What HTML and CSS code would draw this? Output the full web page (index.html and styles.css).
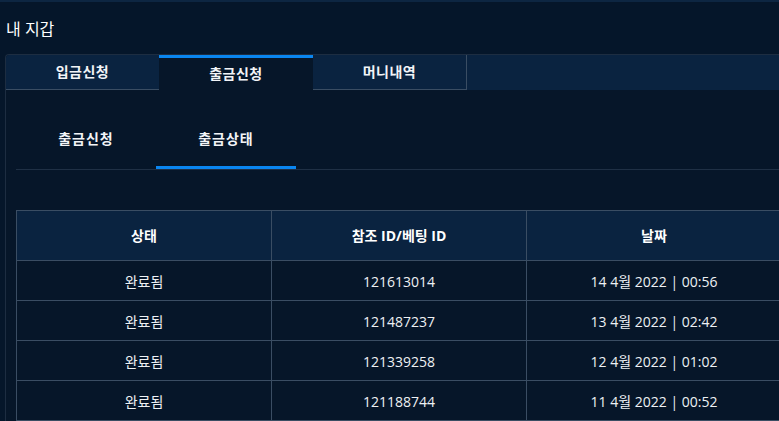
FILE: index.html
```html
<!DOCTYPE html>
<html lang="ko">
<head>
<meta charset="utf-8">
<title>내 지갑</title>
<link rel="stylesheet" href="styles.css">
</head>
<body>
<div class="topbar"></div>
<h1 class="title">내 지갑</h1>
<div class="panel">
  <div class="tabbar">
    <div class="tab">입금신청</div>
    <div class="tab active">출금신청</div>
    <div class="tab last">머니내역</div>
    <div class="tab-fill"></div>
  </div>
  <div class="content">
    <div class="subtabs">
      <div class="subtab">출금신청</div>
      <div class="subtab active">출금상태</div>
    </div>
    <table class="grid">
      <thead>
        <tr><th>상태</th><th>참조 ID/베팅 ID</th><th>날짜</th></tr>
      </thead>
      <tbody>
        <tr><td>완료됨</td><td>121613014</td><td>14 4월 2022 | 00:56</td></tr>
        <tr><td>완료됨</td><td>121487237</td><td>13 4월 2022 | 02:42</td></tr>
        <tr><td>완료됨</td><td>121339258</td><td>12 4월 2022 | 01:02</td></tr>
        <tr><td>완료됨</td><td>121188744</td><td>11 4월 2022 | 00:52</td></tr>
      </tbody>
    </table>
  </div>
</div>
</body>
</html>
```
FILE: styles.css
```css
html, body {
  margin: 0;
  padding: 0;
}
body {
  background: #05162a;
  color: #f2f4f7;
  font-family: "Open Sans", "Noto Sans CJK KR", sans-serif;
  font-size: 14px;
  width: 779px;
  height: 421px;
  overflow: hidden;
}
.topbar {
  height: 2px;
  background: #0d2642;
}
.title {
  margin: 0;
  height: 52px;
  padding: 0 0 0 6px;
  box-sizing: border-box;
  font-size: 16px;
  font-weight: 400;
  line-height: 55px;
  color: #ffffff;
}
.panel {
  margin-left: 5px;
  border-left: 1px solid #1d2d41;
  border-top: 1px solid #1d2d41;
  border-top-left-radius: 4px;
  background: #061629;
  height: 366px;
  overflow: hidden;
}
.tabbar {
  display: flex;
  height: 35px;
  background: #0a2340;
}
.tab {
  width: 153px;
  flex: none;
  box-sizing: border-box;
  border-bottom: 1px solid #3a4d63;
  text-align: center;
  line-height: 33px;
  font-weight: 600;
  letter-spacing: 0.5px;
  color: #f2f4f7;
}
.tab.active {
  width: 154px;
  background: #061629;
  border-top: 3px solid #0a86f0;
  border-bottom: none;
  line-height: 31px;
}
.tab.last {
  width: 154px;
  border-right: 1px solid #3a4d63;
}
.tab-fill {
  flex: 1;
}
.content {
  padding: 20px 0 0 10px;
}
.subtabs {
  display: flex;
  border-bottom: 1px solid #1f3045;
}
.subtab {
  width: 140px;
  height: 59px;
  box-sizing: border-box;
  text-align: center;
  line-height: 58px;
  font-weight: 600;
  letter-spacing: 1px;
  border-bottom: 3px solid transparent;
}
.subtab.active {
  border-bottom-color: #0a86f0;
}
.grid {
  margin-top: 40px;
  border-collapse: collapse;
  table-layout: fixed;
  width: 766px;
}
.grid th, .grid td {
  border: 1px solid #3a4d63;
  text-align: center;
  padding: 0;
}
.grid th {
  height: 47px;
  padding-bottom: 2px;
  background: #0a2340;
  font-weight: 700;
  color: #ffffff;
}
.grid td {
  height: 38px;
  padding-top: 1px;
  color: #eef1f4;
  font-weight: 400;
}
```
